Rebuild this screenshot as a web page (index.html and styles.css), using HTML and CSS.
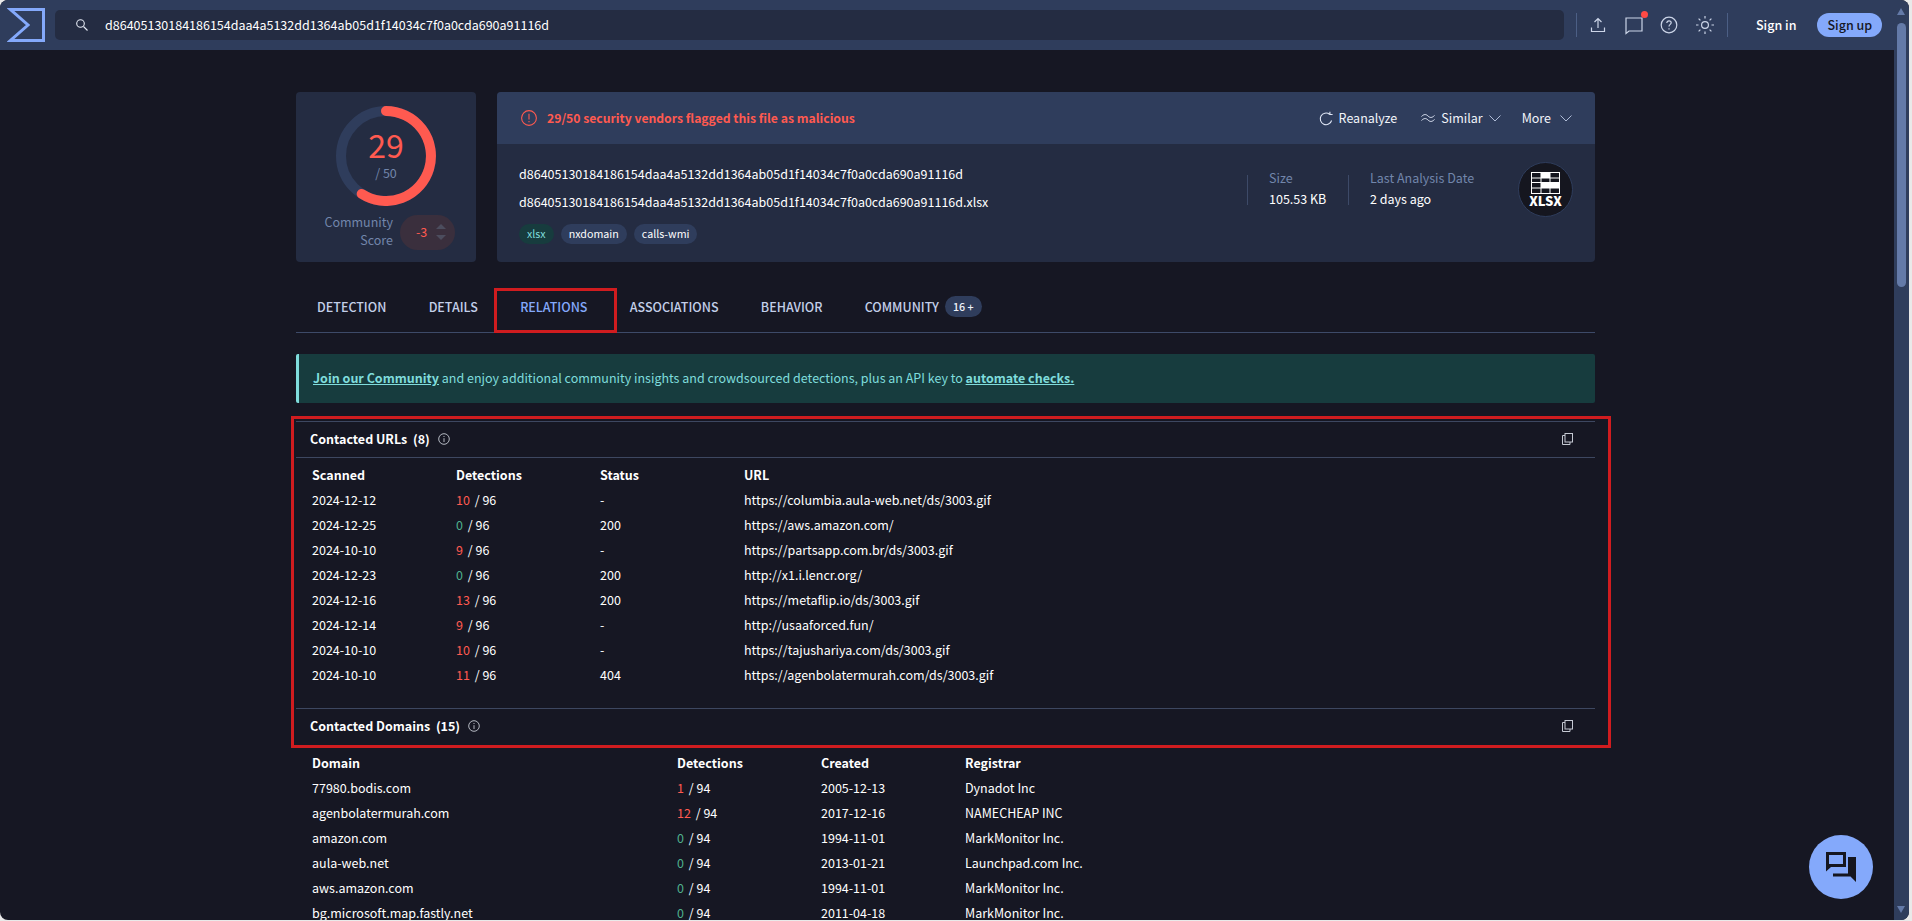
FILE: index.html
```html
<!DOCTYPE html>
<html lang="en">
<head>
    <meta charset="UTF-8">
    <title>VirusTotal - File - d86405130184186154daa4a5132dd1364ab05d1f14034c7f0a0cda690a91116d</title>
    <link rel="stylesheet" href="styles.css">
</head>
<body>
    <div class="frame">
        <div class="viewport">
            <header class="navbar">
                <svg class="logo" width="38" height="34" viewBox="0 0 38 34"><path d="M3.500 1.500H36.500V32.500H3.500L21 17Z" fill="none" stroke="#84a9fb" stroke-width="3"/></svg>
                <div class="search">
                    <svg width="14" height="14" viewBox="0 0 14 14" fill="none" stroke="#e6ebf5" stroke-width="1.100"><circle cx="5.500" cy="5.500" r="3.800"/><path d="M8.500 8.500L12.500 12.500"/></svg>
                    <span>d86405130184186154daa4a5132dd1364ab05d1f14034c7f0a0cda690a91116d</span>
                </div>
                <div class="nav-actions">
                    <svg width="18" height="18" viewBox="0 0 18 18" fill="none" stroke="#ccd5e8" stroke-width="1.200"><path d="M9 12V2.500M5.500 6L9 2.500L12.500 6M2.500 11.500V15.500H15.500V11.500"/></svg>
                    <span class="chat-icon">
                        <svg width="20" height="20" viewBox="0 0 20 20" fill="none" stroke="#ccd5e8" stroke-width="1.200"><path d="M2 3H18V16H5L2 18.500Z"/></svg>
                        <i class="dot"></i>
                    </span>
                    <svg width="18" height="18" viewBox="0 0 18 18" fill="none" stroke="#ccd5e8" stroke-width="1.200"><circle cx="9" cy="9" r="7.800"/><path d="M6.800 7C6.800 5.600 7.800 4.800 9 4.800C10.300 4.800 11.200 5.700 11.200 6.800C11.200 8.300 9 8.500 9 10.400M9 12.200V13.400"/></svg>
                    <svg width="20" height="20" viewBox="0 0 20 20" fill="none" stroke="#ccd5e8" stroke-width="1.200"><circle cx="10" cy="10" r="3.400"/><path d="M10 1V3.500M10 16.500V19M1 10H3.500M16.500 10H19M3.600 3.600L5.400 5.400M14.600 14.600L16.400 16.400M3.600 16.400L5.400 14.600M14.600 5.400L16.400 3.600"/></svg>
                </div>
                <a class="sign-in">Sign in</a>
                <a class="sign-up">Sign up</a>
            </header>

            <main class="content">
                <section class="summary">
                    <div class="score-card">
                        <div class="ring">
                            <svg width="100" height="100" viewBox="0 0 100 100" fill="none" stroke-width="10">
                                <circle cx="50" cy="50" r="45" stroke="#2f3d5c"/>
                                <path d="M50 5A45 45 0 1 1 25.700 87.900" stroke="#ff5a50" stroke-linecap="round"/>
                            </svg>
                            <div class="ring-text">
                                <div class="ring-value">29</div>
                                <div class="ring-total">/ 50</div>
                            </div>
                        </div>
                        <div class="community">
                            <div class="community-label">Community<br>Score</div>
                            <div class="vote">
                                <span class="vote-value">-3</span>
                                <span class="vote-arrows"><i class="up"></i><i class="down"></i></span>
                            </div>
                        </div>
                    </div>

                    <div class="file-card">
                        <div class="file-head">
                            <svg width="16" height="16" viewBox="0 0 16 16" fill="none" stroke="#ff5a50" stroke-width="1.100"><circle cx="8" cy="8" r="7.400"/><path d="M8 3.800V9.400M8 11V12.200"/></svg>
                            <span class="flagged">29/50 security vendors flagged this file as malicious</span>
                            <div class="file-actions">
                                <span class="action">
                                    <svg width="14" height="15" viewBox="0 0 14 15" fill="none" stroke="#dfe6f5" stroke-width="1.100"><path d="M12.600 9.500A5.800 5.800 0 1 1 10.500 3.200M10.900 .8V3.500H13.600"/></svg>
                                    Reanalyze
                                </span>
                                <span class="action">
                                    <svg width="14" height="10" viewBox="0 0 14 10" fill="none" stroke="#dfe6f5" stroke-width="1"><path d="M.5 3.500C3 1 5 1 7 3S11 5 13.500 2.500M.5 7.500C3 5 5 5 7 7S11 9 13.500 6.500"/></svg>
                                    Similar
                                    <svg class="chev" width="12" height="7" viewBox="0 0 12 7" fill="none" stroke="#aebbd6" stroke-width="1"><path d="M.5 .5L6 6L11.500 .5"/></svg>
                                </span>
                                <span class="action more">
                                    More
                                    <svg class="chev" width="12" height="7" viewBox="0 0 12 7" fill="none" stroke="#aebbd6" stroke-width="1"><path d="M.5 .5L6 6L11.500 .5"/></svg>
                                </span>
                            </div>
                        </div>
                        <div class="file-body">
                            <div class="file-names">
                                <div class="file-name">d86405130184186154daa4a5132dd1364ab05d1f14034c7f0a0cda690a91116d</div>
                                <div class="file-name">d86405130184186154daa4a5132dd1364ab05d1f14034c7f0a0cda690a91116d.xlsx</div>
                                <div class="tags">
                                    <span class="tag tag-green">xlsx</span>
                                    <span class="tag">nxdomain</span>
                                    <span class="tag">calls-wmi</span>
                                </div>
                            </div>
                            <div class="file-meta meta-size">
                                <div class="meta-label">Size</div>
                                <div class="meta-value">105.53 KB</div>
                            </div>
                            <div class="file-meta meta-date">
                                <div class="meta-label">Last Analysis Date</div>
                                <div class="meta-value">2 days ago</div>
                            </div>
                            <div class="file-type">
                                <div class="type-circle">
                                    <svg width="30" height="22" viewBox="0 0 30 22">
                                        <rect x=".5" y=".5" width="28" height="21" fill="none" stroke="#fff"/>
                                        <rect x="10" y="1" width="9" height="5" fill="#fff"/>
                                        <rect x="10" y="10" width="19" height="6" fill="#fff"/>
                                        <path d="M1 6H29M1 10.500H10M1 16H29M10 1V21M19 1V21" stroke="#fff" stroke-width="1"/>
                                    </svg>
                                    <span>XLSX</span>
                                </div>
                            </div>
                        </div>
                    </div>
                </section>

                <nav class="tabs">
                    <a class="tab">DETECTION</a>
                    <a class="tab">DETAILS</a>
                    <a class="tab active">RELATIONS</a>
                    <a class="tab">ASSOCIATIONS</a>
                    <a class="tab">BEHAVIOR</a>
                    <a class="tab">COMMUNITY <span class="tab-badge">16 +</span></a>
                </nav>

                <div class="banner">
                    <a>Join our Community</a> and enjoy additional community insights and crowdsourced detections, plus an API key to <a>automate checks.</a>
                </div>

                <div class="section-head first">
                    <span class="section-title">Contacted URLs&nbsp; (8)</span>
                    <svg class="info" width="12" height="12" viewBox="0 0 12 12" fill="none" stroke="#c5c9d3" stroke-width=".9"><circle cx="6" cy="6" r="5.300"/><path d="M6 5.200V9M6 3V4"/></svg>
                    <svg class="copy" width="11" height="12" viewBox="0 0 11 12" fill="none" stroke="#c5c9d3" stroke-width="1"><rect x="3" y=".5" width="7.500" height="8.500"/><path d="M3 2.500H.5V11.500H8V9"/></svg>
                </div>
                <table class="grid">
                    <colgroup><col class="col-144"><col class="col-144"><col class="col-144"><col></colgroup>
                    <thead><tr><th>Scanned</th><th>Detections</th><th>Status</th><th>URL</th></tr></thead>
                    <tbody>
                        <tr><td>2024-12-12</td><td><b class="bad">10</b> / 96</td><td>-</td><td>https://columbia.aula-web.net/ds/3003.gif</td></tr>
                        <tr><td>2024-12-25</td><td><b class="ok">0</b> / 96</td><td>200</td><td>https://aws.amazon.com/</td></tr>
                        <tr><td>2024-10-10</td><td><b class="bad">9</b> / 96</td><td>-</td><td>https://partsapp.com.br/ds/3003.gif</td></tr>
                        <tr><td>2024-12-23</td><td><b class="ok">0</b> / 96</td><td>200</td><td>http://x1.i.lencr.org/</td></tr>
                        <tr><td>2024-12-16</td><td><b class="bad">13</b> / 96</td><td>200</td><td>https://metaflip.io/ds/3003.gif</td></tr>
                        <tr><td>2024-12-14</td><td><b class="bad">9</b> / 96</td><td>-</td><td>http://usaaforced.fun/</td></tr>
                        <tr><td>2024-10-10</td><td><b class="bad">10</b> / 96</td><td>-</td><td>https://tajushariya.com/ds/3003.gif</td></tr>
                        <tr><td>2024-10-10</td><td><b class="bad">11</b> / 96</td><td>404</td><td>https://agenbolatermurah.com/ds/3003.gif</td></tr>
                    </tbody>
                </table>

                <div class="section-head second">
                    <span class="section-title">Contacted Domains&nbsp; (15)</span>
                    <svg class="info" width="12" height="12" viewBox="0 0 12 12" fill="none" stroke="#c5c9d3" stroke-width=".9"><circle cx="6" cy="6" r="5.300"/><path d="M6 5.200V9M6 3V4"/></svg>
                    <svg class="copy" width="11" height="12" viewBox="0 0 11 12" fill="none" stroke="#c5c9d3" stroke-width="1"><rect x="3" y=".5" width="7.500" height="8.500"/><path d="M3 2.500H.5V11.500H8V9"/></svg>
                </div>
                <table class="grid domains">
                    <colgroup><col class="col-365"><col class="col-144"><col class="col-144"><col></colgroup>
                    <thead><tr><th>Domain</th><th>Detections</th><th>Created</th><th>Registrar</th></tr></thead>
                    <tbody>
                        <tr><td>77980.bodis.com</td><td><b class="bad">1</b> / 94</td><td>2005-12-13</td><td>Dynadot Inc</td></tr>
                        <tr><td>agenbolatermurah.com</td><td><b class="bad">12</b> / 94</td><td>2017-12-16</td><td>NAMECHEAP INC</td></tr>
                        <tr><td>amazon.com</td><td><b class="ok">0</b> / 94</td><td>1994-11-01</td><td>MarkMonitor Inc.</td></tr>
                        <tr><td>aula-web.net</td><td><b class="ok">0</b> / 94</td><td>2013-01-21</td><td>Launchpad.com Inc.</td></tr>
                        <tr><td>aws.amazon.com</td><td><b class="ok">0</b> / 94</td><td>1994-11-01</td><td>MarkMonitor Inc.</td></tr>
                        <tr><td>bg.microsoft.map.fastly.net</td><td><b class="ok">0</b> / 94</td><td>2011-04-18</td><td>MarkMonitor Inc.</td></tr>
                    </tbody>
                </table>

                <!-- red annotation boxes drawn on the screenshot -->
                <div class="mark mark-tab"></div>
                <div class="mark mark-section"></div>
            </main>

            <button class="chat-button">
                <svg width="30" height="30" viewBox="0 0 30 30" fill="#15161f"><path d="M0 0H20V15H5L0 19.500ZM3 3V12H17V3Z" fill-rule="evenodd"/><path d="M22 5H30V30L24.500 24.500H7V21.500H22Z"/></svg>
            </button>
        </div>

        <div class="scrollbar">
            <i class="scroll-up"></i>
            <div class="scroll-thumb"></div>
            <i class="scroll-down"></i>
        </div>
    </div>
</body>
</html>
```

FILE: styles.css
```css
html,
body {
    margin: 0;
    height: 921px;
    overflow: hidden;
    background: #e9e9e9;
}

body {
    font-family: "Noto Sans CJK JP", "Noto Sans", sans-serif;
    font-size: 12.5px;
    line-height: 18px;
    color: #fff;
}

.frame {
    display: flex;
    width: 1909px;
    height: 920px;
    border-radius: 8px;
    overflow: hidden;
    background: #161723;
}

.viewport {
    position: relative;
    flex: 1;
    overflow: hidden;
}

/* top bar */
.navbar {
    display: flex;
    align-items: center;
    height: 50px;
    background: #2f3d5c;
}

.logo {
    flex: none;
    margin-left: 7px;
}

.search {
    display: flex;
    align-items: center;
    width: 1509px;
    height: 30px;
    margin-left: 10px;
    background: #242c42;
    border-radius: 5px;
}

.search svg {
    margin-left: 20px;
    margin-right: 16px;
}

.nav-actions {
    display: flex;
    align-items: center;
    justify-content: space-between;
    width: 152px;
    height: 24px;
    margin-left: 12px;
    padding: 0 12px;
    box-sizing: border-box;
    border-left: 1px solid #4c5f85;
    border-right: 1px solid #4c5f85;
}

.chat-icon {
    position: relative;
    display: flex;
}

.dot {
    position: absolute;
    top: -4px;
    right: -4px;
    width: 7px;
    height: 7px;
    border-radius: 50%;
    background: #ff4a45;
}

.sign-in {
    margin-left: 28px;
    font-weight: 500;
}

.sign-up {
    margin-left: 21px;
    padding: 0 10px;
    height: 24px;
    line-height: 24px;
    border-radius: 12px;
    background: #84a9fb;
    color: #161723;
    font-weight: 500;
}

/* page body */
.content {
    position: relative;
    width: 1299px;
    margin: 42px 0 0 296px;
}

.summary {
    display: flex;
    justify-content: space-between;
    height: 170px;
}

.score-card {
    width: 180px;
    background: #242c42;
    border-radius: 4px;
}

.ring {
    position: relative;
    width: 100px;
    height: 100px;
    margin: 14px auto 0;
}

.ring-text {
    position: absolute;
    inset: 0;
    text-align: center;
}

.ring-value {
    margin-top: 19px;
    font-size: 32px;
    line-height: 38px;
    color: #ff5a50;
}

.ring-total {
    margin-top: 1px;
    line-height: 18px;
    color: #7286ab;
}

.community {
    display: flex;
    align-items: center;
    margin-top: 7px;
}

.community-label {
    width: 97px;
    padding-bottom: 2px;
    text-align: right;
    line-height: 18px;
    color: #7286ab;
}

.vote {
    display: flex;
    align-items: center;
    justify-content: space-between;
    box-sizing: border-box;
    width: 55px;
    height: 35px;
    margin-left: 7px;
    padding: 0 9px 0 16px;
    border-radius: 18px;
    background: #3a2f3d;
}

.vote-value {
    color: #ff5a50;
}

.vote-arrows {
    display: flex;
    flex-direction: column;
    gap: 6px;
}

.vote-arrows i {
    width: 0;
    height: 0;
    border-left: 5px solid transparent;
    border-right: 5px solid transparent;
}

.vote-arrows .up {
    border-bottom: 5px solid #4c4d5e;
}

.vote-arrows .down {
    border-top: 5px solid #4c4d5e;
}

.file-card {
    width: 1098px;
    background: #242c42;
    border-radius: 4px;
    overflow: hidden;
}

.file-head {
    display: flex;
    align-items: center;
    height: 52px;
    padding-left: 24px;
    background: #2f3d5c;
}

.flagged {
    margin-left: 10px;
    font-size: 12.200px;
    font-weight: 700;
    color: #ff5a50;
}

.file-actions {
    display: flex;
    margin-left: auto;
    padding-right: 23px;
    color: #f1f4fa;
}

.action {
    display: flex;
    align-items: center;
    gap: 6px;
    margin-left: 24px;
}

.action.more {
    margin-left: 21px;
}

.action.more .chev {
    margin-left: 3px;
}

.file-body {
    display: flex;
    height: 118px;
}

.file-names {
    flex: 1;
    padding: 16px 0 0 22px;
}

.file-name {
    line-height: 28px;
}

.tags {
    display: flex;
    gap: 7px;
    margin-top: 8px;
}

.tag {
    height: 20px;
    line-height: 20px;
    padding: 0 8px;
    border-radius: 10px;
    background: #2f3d5c;
    font-size: 10.700px;
}

.tag-green {
    background: #173c3e;
    color: #7fdcdc;
}

.file-meta {
    align-self: flex-start;
    box-sizing: border-box;
    height: 30px;
    margin-top: 31px;
    border-left: 1px solid #3d4a68;
    padding-left: 21px;
}

.meta-size {
    width: 101px;
}

.meta-date {
    width: 147px;
}

.meta-label {
    margin-top: -7px;
    line-height: 20px;
    color: #7286ab;
}

.meta-value {
    line-height: 22px;
}

.file-type {
    display: flex;
    align-items: center;
    width: 100px;
    height: 90px;
}

.type-circle {
    display: flex;
    flex-direction: column;
    align-items: center;
    justify-content: center;
    box-sizing: border-box;
    width: 55px;
    height: 55px;
    margin-left: 23px;
    border: 1px solid #2f3d5c;
    border-radius: 50%;
    background: #15161f;
}

.type-circle span {
    font-size: 13px;
    line-height: 13px;
    font-weight: 900;
}

/* tabs */
.tabs {
    display: flex;
    align-items: center;
    box-sizing: border-box;
    height: 45px;
    margin-top: 26px;
    padding-bottom: 7px;
    border-bottom: 1px solid #3d4a68;
}

.tab {
    display: flex;
    align-items: center;
    padding: 0 21.300px 0 21px;
    font-weight: 500;
    color: #c3cfe9;
}

.tab.active {
    color: #84a9fb;
}

.tab-badge {
    height: 21px;
    line-height: 21px;
    padding: 0 8px;
    margin-left: 6px;
    border-radius: 11px;
    background: #2f3d5c;
    font-size: 10.700px;
    color: #eef1f8;
}

.banner {
    height: 49px;
    line-height: 47px;
    margin-top: 21px;
    padding-left: 14px;
    background: #173c3e;
    border-left: 3px solid #7fdcdc;
    border-radius: 2px;
    color: #7fdcdc;
}

.banner a {
    font-weight: 700;
    text-decoration: underline;
}

/* relation sections */
.section-head {
    display: flex;
    align-items: center;
    box-sizing: content-box;
    height: 33px;
    padding: 0 22px 2px 14px;
    border-top: 1px solid #3d4760;
}

.section-head.first {
    margin-top: 18px;
    border-bottom: 1px solid #3d4760;
}

.section-head.second {
    margin-top: 19px;
}

.section-title {
    font-weight: 700;
}

.info {
    margin-left: 8px;
}

.copy {
    margin-left: auto;
}

.grid {
    margin: 6px 0 0 16px;
    border-collapse: collapse;
    table-layout: fixed;
    width: 1283px;
}

.grid.domains {
    margin-top: 8px;
}

.col-144 {
    width: 144px;
}

.col-365 {
    width: 365px;
}

.grid th,
.grid td {
    box-sizing: border-box;
    height: 25px;
    padding: 0 0 3px;
    text-align: left;
    white-space: nowrap;
}

.grid th {
    font-weight: 700;
}

.grid b {
    margin-right: 2px;
    font-weight: 400;
}

.bad {
    color: #ff5a50;
}

.ok {
    color: #4fb08d;
}

/* annotation */
.mark {
    position: absolute;
    box-sizing: border-box;
    border: 3px solid #d01c1f;
}

.mark-tab {
    left: 198px;
    top: 196px;
    width: 123px;
    height: 45px;
}

.mark-section {
    left: -5px;
    top: 324px;
    width: 1320px;
    height: 332px;
}

.chat-button {
    position: absolute;
    left: 1809px;
    top: 835px;
    display: flex;
    align-items: center;
    justify-content: center;
    width: 64px;
    height: 64px;
    padding: 0;
    border: 0;
    border-radius: 50%;
    background: #84a9fb;
}

/* scrollbar */
.scrollbar {
    position: relative;
    flex: none;
    width: 15px;
    background: #2f3d5c;
}

.scroll-thumb {
    position: absolute;
    top: 23px;
    left: 3px;
    width: 9px;
    height: 264px;
    border-radius: 5px;
    background: #647aa8;
}

.scroll-up,
.scroll-down {
    position: absolute;
    left: 3px;
    width: 0;
    height: 0;
    border-left: 4.500px solid transparent;
    border-right: 4.500px solid transparent;
}

.scroll-up {
    top: 8px;
    border-bottom: 7px solid #647aa8;
}

.scroll-down {
    bottom: 7px;
    border-top: 7px solid #647aa8;
}
```
